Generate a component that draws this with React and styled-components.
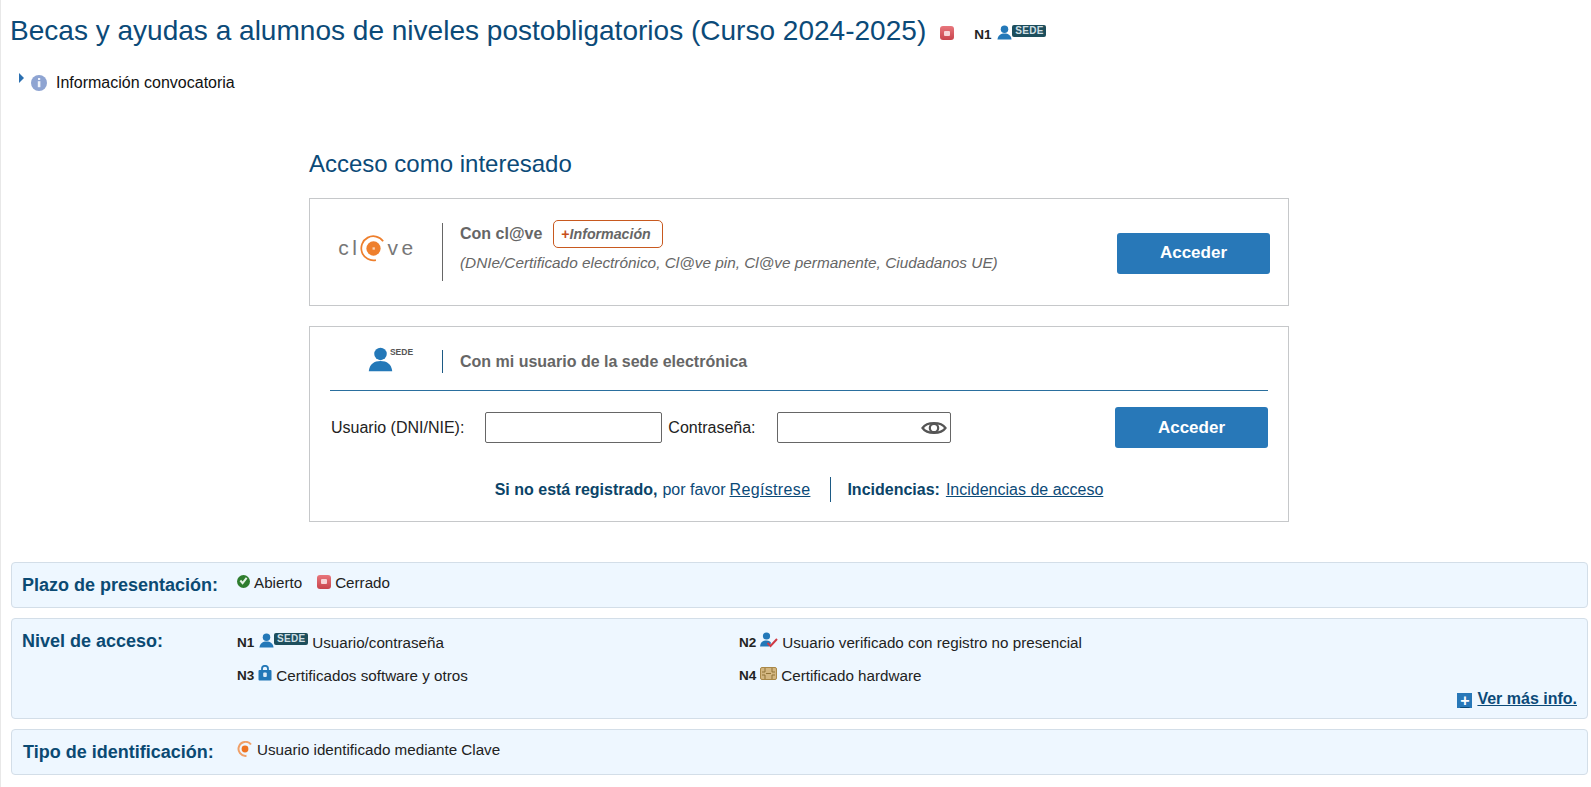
import React from 'react';
import styled, { createGlobalStyle } from 'styled-components';

const GlobalStyle = createGlobalStyle`
  html, body {
    margin: 0;
    padding: 0;
    background: #fff;
    font-family: "Liberation Sans", Arial, sans-serif;
    color: #111;
  }
`;

const Page = styled.div`
  width: 1591px;
  height: 787px;
  box-sizing: border-box;
  overflow: hidden;
  border-left: 1px solid #e8e8e8;
  padding: 15px 3px 0 9px;
`;

const TitleRow = styled.div`
  display: flex;
  align-items: center;
  height: 32px;
`;

const Title = styled.h1`
  margin: 0;
  font-size: 28.04px;
  font-weight: 400;
  color: #0b4a78;
  line-height: 32px;
`;

const CloseIcon = styled.span`
  display: inline-flex;
  align-items: center;
  justify-content: center;
  width: 14px;
  height: 14px;
  border-radius: 3px;
  background: linear-gradient(#e8767c, #c8444c);
  margin: ${({ $m }) => $m || '0'};
  &::after {
    content: '';
    width: 6px;
    height: 5px;
    background: #f7d5d7;
    border-radius: 1px;
  }
`;

const Level = styled.b`
  font-size: 13.5px;
  font-weight: 700;
  color: #222;
`;

const TitleLevel = styled(Level)`
  margin: 7px 6px 0 20px;
`;

const SedeBadge = styled.span`
  display: inline-block;
  background: #1d4e5c;
  color: #cfdfe4;
  font-size: 10px;
  font-weight: 700;
  line-height: 12px;
  height: 12px;
  width: 34px;
  text-align: center;
  box-sizing: border-box;
  border-radius: 2px;
  letter-spacing: 0.3px;
  align-self: flex-start;
`;

const SedeMark = styled.span`
  display: inline-flex;
  align-items: flex-end;
  margin-top: ${({ $mt }) => $mt || 0}px;
  svg { display: block; }
`;

const InfoRow = styled.div`
  display: flex;
  align-items: center;
  margin: 26px 0 0 9px;
  font-size: 16px;
  height: 20px;
`;

const Caret = styled.span`
  width: 0;
  height: 0;
  border-left: 5px solid #2a6fb0;
  border-top: 5px solid transparent;
  border-bottom: 5px solid transparent;
  margin: 0 7px 10px 0;
`;

const InfoLabel = styled.span`
  margin-left: 9px;
`;

const Access = styled.section`
  margin: 58px 0 0 299px;
  width: 980px;
`;

const AccessTitle = styled.h2`
  margin: 0;
  font-size: 24px;
  font-weight: 400;
  color: #0b4a78;
  line-height: 26px;
`;

const Card = styled.div`
  margin-top: ${({ $mt }) => $mt}px;
  border: 1px solid #c6c8ca;
  box-sizing: border-box;
  height: ${({ $h }) => $h}px;
`;

const ClaveCard = styled(Card)`
  display: grid;
  grid-template-columns: 133px 1fr auto;
  align-items: center;
  padding-right: 18px;
`;

const Logo = styled.div`
  display: flex;
  align-items: center;
  justify-content: center;
  box-sizing: border-box;
  color: #777;
  font-size: 21px;
  letter-spacing: 3.5px;
  padding: 0 0 8px 3px;
  height: 58px;
  border-right: 1px solid #666;
`;

const ClaveText = styled.div`
  padding: 0 0 13px 17px;
`;

const ClaveHead = styled.div`
  display: flex;
  align-items: center;
  gap: 11px;
  font-size: 16px;
  font-weight: 700;
  color: #666;
`;

const MoreInfo = styled.span`
  border: 1px solid #c8591f;
  border-radius: 5px;
  box-sizing: border-box;
  padding: 0 11px 0 7px;
  height: 28px;
  line-height: 26px;
  font-size: 14.2px;
  font-style: italic;
  color: #666;
  b {
    color: #c8501a;
    font-style: normal;
  }
`;

const ClaveSub = styled.div`
  margin-top: 6px;
  font-size: 15.35px;
  font-style: italic;
  color: #666;
`;

const Button = styled.button`
  width: 153px;
  height: 41px;
  background: #2878b8;
  border: 0;
  border-radius: 3px;
  color: #fff;
  font-family: inherit;
  font-size: 17px;
  font-weight: 700;
`;

const ClaveButton = styled(Button)`
  margin-top: 2px;
`;

const SedeHead = styled.div`
  margin: 0 20px;
  height: 64px;
  box-sizing: border-box;
  padding-top: 6px;
  display: flex;
  align-items: center;
  border-bottom: 1px solid #2a6f9e;
  font-size: 16px;
  font-weight: 700;
  color: #666;
`;

const SedeLogo = styled.div`
  width: 113px;
  height: 23px;
  border-right: 1px solid #1c5a85;
  display: flex;
  justify-content: center;
  padding-left: 9px;
  box-sizing: border-box;
  svg { margin-top: -3px; }
`;

const SedeTag = styled.span`
  font-size: 8.5px;
  font-weight: 700;
  color: #555;
  margin-left: -3px;
  line-height: 11px;
  margin-top: -3px;
`;

const SedeTitle = styled.span`
  padding-left: 17px;
`;

const FormRow = styled.div`
  display: flex;
  align-items: center;
  margin: 16px 0 0 21px;
  height: 41px;
  font-size: 16px;
  color: #222;
`;

const Input = styled.div`
  position: relative;
  box-sizing: border-box;
  width: ${({ $w }) => $w}px;
  height: 31px;
  margin: 0 ${({ $mr }) => $mr}px 0 ${({ $ml }) => $ml}px;
  border: 1px solid #666;
  border-radius: 2px;
  background: #fff;
`;

const Eye = styled.svg`
  position: absolute;
  right: 3px;
  top: 7px;
`;

const FormButton = styled(Button)`
  margin-left: auto;
  margin-right: 20px;
`;

const FootRow = styled.div`
  margin-top: 29px;
  display: flex;
  justify-content: center;
  align-items: center;
  height: 25px;
  font-size: 16px;
  color: #0b4a78;
`;

const FootPart = styled.span`
  display: inline-flex;
  gap: 5px;
  b { color: #0a4468; }
`;

const FootLink = styled.a`
  color: #0b4a78;
  text-decoration: underline;
  margin-left: ${({ $ml }) => $ml || 0}px;
  letter-spacing: ${({ $ls }) => $ls || 0}px;
`;

const FootDivider = styled.span`
  width: 1px;
  height: 25px;
  background: #1c5a85;
  margin: 0 16px 0 20px;
`;

const Panels = styled.div`
  margin-top: 40px;
  margin-left: 1px;
  display: flex;
  flex-direction: column;
  gap: 10px;
`;

const Panel = styled.div`
  box-sizing: border-box;
  position: relative;
  display: grid;
  grid-template-columns: 215px 1fr;
  align-content: start;
  height: ${({ $h }) => $h}px;
  padding: 11px 11px 0 10px;
  background: #eef7ff;
  border: 1px solid #d3dee8;
  border-radius: 4px;
`;

const PanelLabel = styled.div`
  font-size: 18px;
  font-weight: 700;
  color: #0b4a73;
  line-height: 22px;
  padding-left: ${({ $pl }) => $pl || 0}px;
`;

const States = styled.div`
  display: flex;
  align-items: center;
  gap: 4px;
  font-size: 15.2px;
  line-height: 18px;
  height: 20px;
  margin-top: -1px;
  color: #222;
  svg, span { margin-bottom: 3px; }
`;

const Dot = styled.span`
  display: inline-flex;
  align-items: center;
  justify-content: center;
  width: 13px;
  height: 13px;
  border-radius: 50%;
  background: #2e7d2e;
`;

const LevelGrid = styled.div`
  display: grid;
  grid-template-columns: 502px 1fr;
  row-gap: 13px;
  padding-top: 2px;
`;

const LevelItem = styled.div`
  display: flex;
  align-items: center;
  gap: 4px;
  height: 20px;
  font-size: 15.2px;
  color: #222;
  > svg { margin-bottom: 4px; }
`;

const LevelSede = styled(SedeMark)`
  margin: 0 0 4px 1px;
`;

const MoreLink = styled.a`
  position: absolute;
  right: 10px;
  bottom: 10px;
  display: flex;
  align-items: flex-end;
  gap: 5px;
  font-size: 16px;
  font-weight: 700;
  color: #0b4a78;
  text-decoration: underline;
`;

const PlusBox = styled.span`
  display: inline-flex;
  align-items: center;
  justify-content: center;
  width: 15px;
  height: 15px;
  background: #2878b8;
  color: #fff;
  font-size: 16px;
  line-height: 15px;
`;

const Person = ({ size = 15, color = '#2378b8' }) => (
  <svg width={size} height={size} viewBox="0 0 16 16">
    <circle cx="8" cy="4.4" r="4" fill={color} />
    <path d="M0.5 15.5 C1 11 4 9 8 9 C12 9 15 11 15.5 15.5 Z" fill={color} />
  </svg>
);

const InfoIcon = () => (
  <svg width="16" height="16" viewBox="0 0 16 16">
    <circle cx="8" cy="8" r="8" fill="#8ea4d2" />
    <rect x="7" y="3" width="2.2" height="2" fill="#eef2fa" />
    <rect x="6.8" y="6.2" width="2.6" height="6" fill="#eef2fa" />
  </svg>
);

const ClaveMark = () => (
  <svg width="27" height="27" viewBox="0 0 28 28">
    <path d="M24 6.5 A12.5 12.5 0 1 0 16.5 26" fill="none" stroke="#ee7f2d" strokeWidth="1.8" />
    <circle cx="14" cy="14" r="7.4" fill="#ee7f2d" />
    <rect x="13" y="12.8" width="2.4" height="2.4" fill="#fbd6b8" />
  </svg>
);

const Check = () => (
  <Dot>
    <svg width="9" height="9" viewBox="0 0 10 10">
      <path d="M1.5 5 L4 8 L8.5 2" fill="none" stroke="#e6f3e6" strokeWidth="2.2" />
    </svg>
  </Dot>
);

const CheckedUser = () => (
  <svg width="18" height="16" viewBox="0 0 18 16">
    <circle cx="6.5" cy="4" r="3.6" fill="#2378b8" />
    <path d="M0 14.5 C0.5 10 3 8.5 6.5 8.5 C9 8.5 10.5 9.5 11 11 L9 14.5 Z" fill="#2378b8" />
    <path d="M7.5 11 L10.5 14 L17 7" fill="none" stroke="#cf3b45" strokeWidth="2" />
  </svg>
);

const Lock = () => (
  <svg width="14" height="16" viewBox="0 0 14 16">
    <path d="M4 6 V3.8 A3 3 0 0 1 10 3.8 V6" fill="none" stroke="#2378b8" strokeWidth="1.8" />
    <rect x="0.5" y="5" width="13" height="10.5" rx="1" fill="#2378b8" />
    <rect x="5.2" y="7.5" width="3.6" height="4.5" rx="1" fill="#dcebf7" />
  </svg>
);

const ChipIcon = () => (
  <svg width="17" height="13" viewBox="0 0 17 13">
    <rect x="0.5" y="0.5" width="16" height="12" rx="1.5" fill="#d3b680" stroke="#a98848" />
    <path d="M5 1 V5 H2 M12 1 V5 H15 M5 12 V8 H2 M12 12 V8 H15 M6 6.5 H11" fill="none" stroke="#8f7236" />
  </svg>
);

const ClaveDot = () => (
  <svg width="16" height="16" viewBox="0 0 16 16">
    <path d="M14 3.5 A7 7 0 1 0 9.5 14.8" fill="none" stroke="#f0a068" strokeWidth="2" />
    <circle cx="8" cy="8" r="3.4" fill="#ee7422" />
  </svg>
);

export default function App() {
  return (
    <>
      <GlobalStyle />
      <Page>
        <TitleRow>
          <Title>Becas y ayudas a alumnos de niveles postobligatorios (Curso 2024-2025)</Title>
          <CloseIcon $m="4px 0 0 14px" />
          <TitleLevel>N1</TitleLevel>
          <SedeMark $mt={2}>
            <Person size={15} />
            <SedeBadge>SEDE</SedeBadge>
          </SedeMark>
        </TitleRow>
        <InfoRow>
          <Caret />
          <InfoIcon />
          <InfoLabel>Información convocatoria</InfoLabel>
        </InfoRow>

        <Access>
          <AccessTitle>Acceso como interesado</AccessTitle>
          <ClaveCard $mt={21} $h={108}>
            <Logo>
              cl<ClaveMark />ve
            </Logo>
            <ClaveText>
              <ClaveHead>
                Con cl@ve
                <MoreInfo><b>+</b>Información</MoreInfo>
              </ClaveHead>
              <ClaveSub>(DNIe/Certificado electrónico, Cl@ve pin, Cl@ve permanente, Ciudadanos UE)</ClaveSub>
            </ClaveText>
            <ClaveButton>Acceder</ClaveButton>
          </ClaveCard>

          <Card $mt={20} $h={196}>
            <SedeHead>
              <SedeLogo>
                <Person size={25} />
                <SedeTag>SEDE</SedeTag>
              </SedeLogo>
              <SedeTitle>Con mi usuario de la sede electrónica</SedeTitle>
            </SedeHead>
            <FormRow>
              Usuario (DNI/NIE):
              <Input $w={177} $ml={21} $mr={6} />
              Contraseña:
              <Input $w={174} $ml={21} $mr={0}>
                <Eye width="26" height="16" viewBox="0 0 26 16">
                  <path d="M1.5 8 C6 1.5 20 1.5 24.5 8 C20 14.5 6 14.5 1.5 8 Z" fill="none" stroke="#555" strokeWidth="2.2" />
                  <circle cx="13" cy="8" r="4.2" fill="none" stroke="#555" strokeWidth="2.2" />
                </Eye>
              </Input>
              <FormButton>Acceder</FormButton>
            </FormRow>
            <FootRow>
              <FootPart>
                <b>Si no está registrado,</b> por favor
                <FootLink $ml={-1} $ls={0.35}>Regístrese</FootLink>
              </FootPart>
              <FootDivider />
              <FootPart>
                <b>Incidencias:</b>
                <FootLink $ml={1}>Incidencias de acceso</FootLink>
              </FootPart>
            </FootRow>
          </Card>
        </Access>

        <Panels>
          <Panel $h={46}>
            <PanelLabel>Plazo de presentación:</PanelLabel>
            <States>
              <Check /> Abierto
              <CloseIcon $m="0 0 3px 11px" /> Cerrado
            </States>
          </Panel>
          <Panel $h={101}>
            <PanelLabel>Nivel de acceso:</PanelLabel>
            <LevelGrid>
              <LevelItem>
                <Level>N1</Level>
                <LevelSede>
                  <Person size={15} />
                  <SedeBadge>SEDE</SedeBadge>
                </LevelSede>
                Usuario/contraseña
              </LevelItem>
              <LevelItem><Level>N2</Level><CheckedUser /> Usuario verificado con registro no presencial</LevelItem>
              <LevelItem><Level>N3</Level><Lock /> Certificados software y otros</LevelItem>
              <LevelItem><Level>N4</Level><ChipIcon /> Certificado hardware</LevelItem>
            </LevelGrid>
            <MoreLink><PlusBox>+</PlusBox>Ver más info.</MoreLink>
          </Panel>
          <Panel $h={46}>
            <PanelLabel $pl={1}>Tipo de identificación:</PanelLabel>
            <States>
              <ClaveDot /> Usuario identificado mediante Clave
            </States>
          </Panel>
        </Panels>
      </Page>
    </>
  );
}
